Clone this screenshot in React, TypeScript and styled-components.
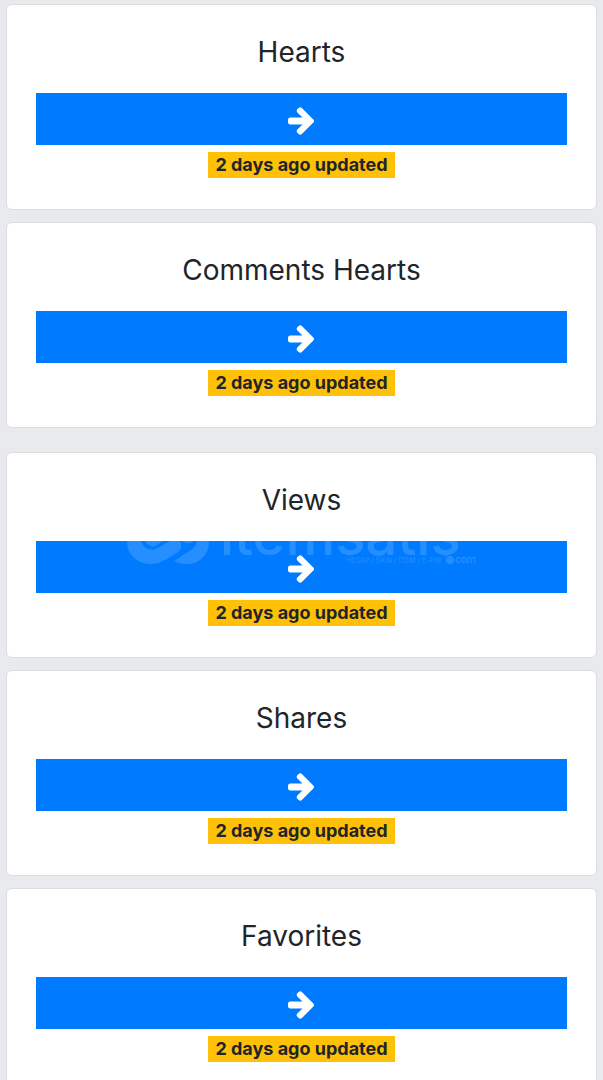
import React from "react";
import styled, { createGlobalStyle } from "styled-components";

const GlobalStyle = createGlobalStyle`
  *, *::before, *::after { box-sizing: border-box; }
  body {
    margin: 0;
    background: #e9eaee;
    color: #212529;
    font-family: Inter, "Liberation Sans", sans-serif;
  }
`;

const Page = styled.main`
  display: flex;
  flex-direction: column;
  gap: 24px;
  padding: 4px 6px 24px;
`;

const Group = styled.section`
  display: flex;
  flex-direction: column;
  gap: 12px;
`;

const Card = styled.article`
  display: flex;
  flex-direction: column;
  align-items: center;
  padding: 30px 29px 31px;
  background: #fff;
  border: 1px solid #dcdddf;
  border-radius: 6px;
`;

const Title = styled.h2`
  margin: 0 0 23px;
  font-size: 28px;
  line-height: 35px;
  font-weight: 400;
`;

const OpenButton = styled.button`
  position: relative;
  display: flex;
  align-items: center;
  justify-content: center;
  width: 100%;
  height: 52px;
  padding: 3px 2px 0 0;
  overflow: hidden;
  border: 0;
  background: #007bff;
  color: #fff;
  cursor: pointer;
`;

const ArrowIcon = styled.svg`
  position: relative;
  width: 26px;
  height: 28px;
  fill: currentColor;
`;

const Badge = styled.span`
  margin-top: 7px;
  padding: 0 7px;
  background: #ffc107;
  font-size: 18px;
  line-height: 26px;
  font-weight: 700;
`;

const WatermarkArt = styled.svg`
  position: absolute;
  top: 0;
  left: 50%;
  width: 360px;
  height: 28px;
  margin-left: -178px;
  opacity: 0.15;
  pointer-events: none;
`;

function Watermark() {
  return (
    <WatermarkArt viewBox="124 541 360 28" aria-hidden="true" fill="#fff">
      <clipPath id="wordmark-body">
        <rect x="216" y="541" width="260" height="15" />
      </clipPath>
      <path d="M127 541 C127 555 138 564 151 564 C157 564 161 562 165 560 L178 552 C182 549 182 544 180 541 H170 L158 548 C152 552 143 549 141 541 Z" />
      <path d="M145 541 H163 L155 546 C151 547 147 545 145 541 Z" />
      <path d="M182 541 H193 C191 544 185 544 182 541 Z" />
      <path d="M209 541 C209 555 199 564 187 564 C182 564 178 563 174 561 L188 552 C193 549 196 546 197 541 Z" />
      <text x="220" y="555" fontFamily="Inter, sans-serif" fontWeight="500" fontSize="56" clipPath="url(#wordmark-body)">itemsatış</text>
      <text x="346" y="563" fontFamily="Inter, sans-serif" fontWeight="500" fontSize="7" opacity="0.7">HESAP / SKIN / ITEM / E-PIN</text>
      <circle cx="450" cy="560" r="4" />
      <text x="455" y="563" fontFamily="Inter, sans-serif" fontWeight="500" fontSize="10">com</text>
    </WatermarkArt>
  );
}

interface ServiceCardProps {
  name: string;
  watermark?: boolean;
}

function ServiceCard({ name, watermark }: ServiceCardProps) {
  return (
    <Card>
      <Title>{name}</Title>
      <OpenButton type="button" aria-label={`Open ${name}`}>
        {watermark && <Watermark />}
        <ArrowIcon viewBox="0 -75 1472 1558" aria-hidden="true">
          <path d="M1472 704q0 54-37 91l-651 651q-39 37-91 37-51 0-90-37l-75-75q-38-38-38-91t38-91l293-293H117q-52 0-84.500-37.500T0 768V640q0-53 32.500-90.500T117 512h704L528 218q-38-36-38-90t38-90l75-75q38-38 90-38 53 0 91 38l651 651q37 35 37 90z" />
        </ArrowIcon>
      </OpenButton>
      <Badge>2 days ago updated</Badge>
    </Card>
  );
}

export default function App() {
  return (
    <>
      <GlobalStyle />
      <Page>
        <Group>
          <ServiceCard name="Hearts" />
          <ServiceCard name="Comments Hearts" />
        </Group>
        <Group>
          <ServiceCard name="Views" watermark />
          <ServiceCard name="Shares" />
          <ServiceCard name="Favorites" />
        </Group>
      </Page>
    </>
  );
}
